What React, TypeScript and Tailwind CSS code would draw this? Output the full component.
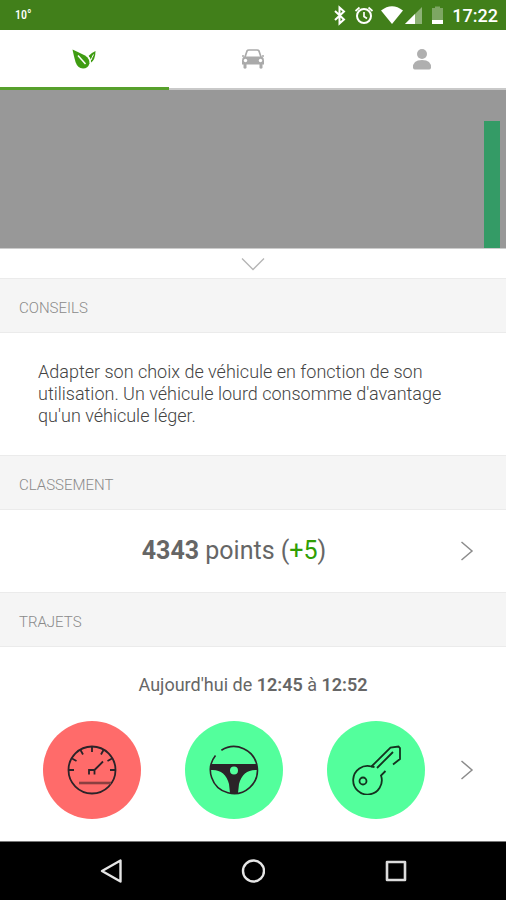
import React from "react";

function Chevron() {
  return (
    <svg className="h-5 w-3.5 shrink-0" viewBox="0 0 14 20" fill="none" stroke="#8c8c8c" strokeWidth="1.5" aria-hidden="true">
      <path d="M1.5 1l10.5 9L1.5 19" />
    </svg>
  );
}

function SectionTitle({ children }: { children: React.ReactNode }) {
  return (
    <h2 className="flex h-[55px] items-center border-y border-[#ebebeb] bg-[#f5f5f5] px-[19px] pt-1.5 text-[15px] font-light text-[#8a8a8a]">
      {children}
    </h2>
  );
}

function StatusBar() {
  return (
    <header className="flex h-[30px] items-center justify-between bg-[#417f1a] pl-[15px] pr-2 text-white">
      <span className="font-['Roboto_Condensed',Roboto,sans-serif] text-xs font-medium">10°</span>
      <div className="flex items-center">
        <svg className="h-[30px] w-[128px]" viewBox="0 0 128 30" fill="none" aria-hidden="true">
          <path d="M15 11l9 8.500-4.500 4v-16l4.500 4-9 8.500" stroke="#fff" strokeWidth="2" />
          <circle cx="44" cy="16" r="7" stroke="#fff" strokeWidth="2" />
          <path d="M44 12v4.500l3 2M35.500 11l4-3.500M52.500 11l-4-3.500" stroke="#fff" strokeWidth="1.700" />
          <path d="M61 10.500Q72 2 83 10.500L72 24Z" fill="#fff" />
          <path d="M102 7v17H85Z" fill="#8db276" />
          <path d="M95 14v10H85Z" fill="#fff" />
          <path d="M112 8h3V6.500h5V8h3v16h-11Z" fill="#7da663" />
          <path d="M112 20h11v4h-11Z" fill="#fff" />
        </svg>
        <time className="pl-1 pt-0.5 text-lg font-medium">17:22</time>
      </div>
    </header>
  );
}

function Tabs() {
  return (
    <nav className="grid h-[60px] grid-cols-3 bg-white">
      <button aria-label="Conduite" className="flex items-center justify-center border-b-3 border-[#57a02c]">
        <svg className="h-[22px] w-6" viewBox="0 0 24 22" aria-hidden="true">
          <path d="M.5 1.500Q8 5 13 7.500Q18 11 17.500 15.500Q16 20.500 11 20.500Q5.500 20 3.500 14Q2 9 .5 1.500Z" fill="#3f9c12" />
          <path d="M6 7.500l7.500 8.500" stroke="#fff" strokeWidth="1.500" />
          <path d="M23.500 3Q23.500 12 18.500 15Q19.500 11 16.500 8Q19 5 23.500 3Z" fill="#3f9c12" />
          <path d="M21.500 6.500Q20 9.500 19 12" stroke="#fff" strokeWidth="1" fill="none" />
          <path d="M15.500 7.500Q19.500 11 18.500 16" stroke="#fff" strokeWidth="1" fill="none" />
        </svg>
      </button>
      <button aria-label="Véhicule" className="flex items-center justify-center border-b-2 border-[#c9c9c9]">
        <svg className="h-5 w-6" viewBox="0 0 24 20" aria-hidden="true">
          <path d="M4 8L6 2Q6.500 1 8 1h8q1.500 0 2 1l2 6" fill="none" stroke="#aaa" strokeWidth="1.700" />
          <path d="M3 7.500h18q2 1 2 4v4h-1.500v3.500q-1.500 1.500-3 0v-3.500h-13v3.500q-1.500 1.500-3 0v-3.500H1v-4q0-3 2-4Z" fill="#aaa" />
          <path d="M1 7h2M21 7h2" stroke="#aaa" strokeWidth="1.500" />
          <circle cx="4.500" cy="11.500" r="1.700" fill="#fff" />
          <circle cx="19.500" cy="11.500" r="1.700" fill="#fff" />
        </svg>
      </button>
      <button aria-label="Profil" className="flex items-center justify-center border-b-2 border-[#c9c9c9]">
        <svg className="h-[22px] w-5" viewBox="0 0 20 22" fill="#afafaf" aria-hidden="true">
          <circle cx="10" cy="6" r="5" />
          <path d="M1 20q-.5-8 9-8t9 8q-.5 1.500-2 1.500H3Q1.500 21.500 1 20Z" />
        </svg>
      </button>
    </nav>
  );
}

function GaugeIcon() {
  return (
    <svg className="size-[50px]" viewBox="0 0 50 50" fill="none" stroke="#2b2328" strokeWidth="1.800" aria-hidden="true">
      <circle cx="25" cy="25" r="23.500" />
      <path d="M2 25h5M43 25h5M25 2v5M13.500 5l2.500 4.500M36.500 5L34 9.500M5 13.500L9.500 16M45 13.500L40.500 16" />
      <path d="M22 29.500V25h5.500v4.500M27.500 25l8.500-8.500" />
      <path d="M12 38h32" stroke="#8b3f40" strokeWidth="2.600" />
    </svg>
  );
}

function WheelIcon() {
  return (
    <svg className="size-[50px]" viewBox="0 0 50 50" fill="none" aria-hidden="true">
      <path d="M12.400 5.200A23.500 23.500 0 1 1 6.500 10.500" stroke="#2b2328" strokeWidth="1.600" />
      <path fillRule="evenodd" d="M2 19h46v6q-14-1-18 14l-1 9h-8l-1-9Q16 24 2 25ZM25 21.500a4 4 0 1 0 0 8 4 4 0 1 0 0-8Z" fill="#2b2328" />
    </svg>
  );
}

function KeyIcon() {
  return (
    <svg className="size-[50px]" viewBox="0 0 50 50" fill="none" stroke="#14321f" strokeWidth="1.800" aria-hidden="true">
      <path d="M34.500 26L30 30.500A14.300 14.300 0 1 1 20.500 21.500L39.500 2.500L47.500 1.500 49 3v11l-7 5.500" />
      <path d="M20.500 21.500l3 .5M42 7L26 23" />
      <circle cx="12" cy="36" r="3.500" />
    </svg>
  );
}

const indicators = [
  { label: "Vitesse", color: "bg-[#ff6b6a]", icon: <GaugeIcon /> },
  { label: "Conduite", color: "bg-[#53ff9c]", icon: <WheelIcon /> },
  { label: "Démarrage", color: "bg-[#53ff9c]", icon: <KeyIcon /> },
];

function SystemNav() {
  return (
    <footer className="flex h-[59px] items-center justify-center gap-[118px] border-t border-[#777] bg-black">
      <button aria-label="Retour">
        <svg className="size-6" viewBox="0 0 24 24" fill="none" stroke="#e6e6e6" strokeWidth="2.400" strokeLinejoin="round" aria-hidden="true">
          <path d="M21.500 1.500v21L3 12Z" />
        </svg>
      </button>
      <button aria-label="Accueil">
        <svg className="size-6" viewBox="0 0 24 24" fill="none" stroke="#e6e6e6" strokeWidth="2.400" aria-hidden="true">
          <circle cx="12.500" cy="12" r="10.500" />
        </svg>
      </button>
      <button aria-label="Applications récentes">
        <svg className="size-6" viewBox="0 0 24 24" fill="none" stroke="#dcdcdc" strokeWidth="2.600" strokeLinejoin="round" aria-hidden="true">
          <path d="M4 3h18v18H4Z" />
        </svg>
      </button>
    </footer>
  );
}

export default function App() {
  return (
    <div className="flex min-h-screen flex-col bg-white font-[Roboto,sans-serif] text-[#666]">
      <StatusBar />
      <Tabs />
      <main className="grow">
        <div className="flex h-[158px] items-end justify-end bg-[#989898] pr-1.5">
          <div className="h-[127px] w-4 bg-[#349b66]" />
        </div>
        <button aria-label="Déplier" className="flex h-[30px] w-full items-center justify-center border-t border-[#ccc]">
          <svg className="h-3.5 w-6" viewBox="0 0 24 14" fill="none" stroke="#b5b5b5" strokeWidth="1.300" aria-hidden="true">
            <path d="M1 1.500l11 11 11-11" />
          </svg>
        </button>

        <SectionTitle>CONSEILS</SectionTitle>
        <p className="px-[38px] py-7 text-lg font-light leading-[22px] text-[#444]">
          Adapter son choix de véhicule en fonction de son utilisation. Un véhicule lourd consomme d'avantage qu'un véhicule léger.
        </p>

        <SectionTitle>CLASSEMENT</SectionTitle>
        <a href="#classement" className="flex h-[82px] items-center pl-2 pr-8">
          <span className="grow text-center text-[25px]">
            <strong className="font-bold">4343</strong> points (<span className="text-[#2f9e05]">+5</span>)
          </span>
          <Chevron />
        </a>

        <SectionTitle>TRAJETS</SectionTitle>
        <p className="pt-[26px] text-center text-lg leading-6">
          Aujourd'hui de <strong className="font-semibold">12:45</strong> à <strong className="font-semibold">12:52</strong>
        </p>
        <a href="#trajet" className="flex items-center pb-[22px] pl-2 pr-8 pt-6">
          <span className="flex grow justify-center gap-11">
            {indicators.map((item) => (
              <span key={item.label} role="img" aria-label={item.label} className={"flex size-[98px] items-center justify-center rounded-full " + item.color}>
                {item.icon}
              </span>
            ))}
          </span>
          <Chevron />
        </a>
      </main>
      <SystemNav />
    </div>
  );
}
